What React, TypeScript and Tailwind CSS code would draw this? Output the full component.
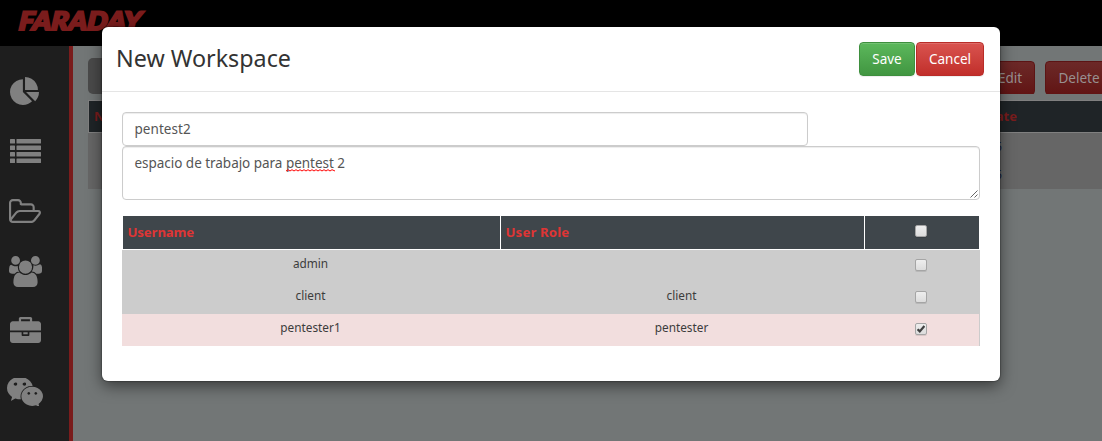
import React from "react";

const icons = {
  pie: "M768 890l546 546q-106 108-247.5 168t-298.5 60q-209 0-385.5-103t-279.5-279.5-103-385.5 103-385.5 279.5-279.5 385.5-103v762zm187 6h773q0 157-60 298.5t-168 247.5zm709-128h-768v-768q209 0 385.5 103t279.5 279.5 103 385.5z",
  folder:
    "M1845 931q0-35-53-35h-1088q-40 0-85.5 21.5t-71.5 52.5l-294 363q-18 24-18 40 0 35 53 35h1088q40 0 86-22t71-53l294-363q18-22 18-39zm-1141-163h768v-160q0-40-28-68t-68-28h-576q-40 0-68-28t-28-68v-64q0-40-28-68t-68-28h-320q-40 0-68 28t-28 68v853l256-315q44-53 116-87.5t140-34.5zm1269 163q0 62-46 120l-295 363q-43 53-116 87.5t-140 34.5h-1088q-92 0-158-66t-66-158v-960q0-92 66-158t158-66h320q92 0 158 66t66 158v32h544q92 0 158 66t66 158v160h192q54 0 99 24.5t67 70.5q15 32 15 68z",
  users:
    "M657 896q-162 5-265 128h-134q-82 0-138-40.5t-56-118.5q0-353 124-353 6 0 43.5 21t97.5 42.5 119 21.5q67 0 133-23-5 37-5 66 0 159 93 293zm1071 637q0 120-73 189.5t-194 69.5h-874q-121 0-194-69.5t-73-189.5q0-53 3.5-103.5t14-109 26.5-108.5 43-97.5 62-81 85.5-53.5 111.5-20q10 0 43 21.5t73 48 107 48 135 21.5 135-21.5 107-48 73-48 43-21.5q61 0 111.5 20t85.5 53.5 62 81 43 97.5 26.5 108.5 14 109 3.5 103.5zm-1024-1277q0 106-75 181t-181 75-181-75-75-181 75-181 181-75 181 75 75 181zm704 384q0 159-112.5 271.5t-271.5 112.5-271.5-112.5-112.5-271.5 112.5-271.5 271.5-112.5 271.5 112.5 112.5 271.5zm576 225q0 78-56 118.5t-138 40.5h-134q-103-123-265-128 93-134 93-293 0-29-5-66 66 23 133 23 59 0 119-21.5t97.5-42.5 43.5-21q124 0 124 353zm-128-609q0 106-75 181t-181 75-181-75-75-181 75-181 181-75 181 75 75 181z",
  briefcase:
    "M640 256h512v-128h-512v128zm1152 640v480q0 66-47 113t-113 47h-1472q-66 0-113-47t-47-113v-480h672v160q0 26 19 45t45 19h320q26 0 45-19t19-45v-160h672zm-768 0v128h-256v-128h256zm768-480v384h-1792v-384q0-66 47-113t113-47h352v-160q0-40 28-68t68-28h576q40 0 68 28t28 68v160h352q66 0 113 47t47 113z",
  chat: "M580 461q0-41-25-66t-66-25q-43 0-76 25.5t-33 65.5q0 39 33 64.5t76 25.5q41 0 66-24.5t25-65.5zm743 507q0-28-25.5-50t-65.5-22q-27 0-49.5 22.5t-22.5 49.5q0 28 22.5 50.5t49.5 22.5q40 0 65.5-22t25.5-51zm-236-507q0-41-24.5-66t-65.5-25q-43 0-76 25.5t-33 65.5q0 39 33 64.5t76 25.5q41 0 65.5-24.5t24.5-65.5zm635 507q0-28-26-50t-65-22q-27 0-49.5 22.5t-22.5 49.5q0 28 22.5 50.5t49.5 22.5q39 0 65-22t26-51zm-266-397q-31-4-70-4-169 0-311 77t-223.5 208.5-81.5 287.5q0 78 23 152-35 3-68 3-26 0-50-1.5t-55-6.5-44.5-7-54.5-10.5-50-10.5l-253 127 72-218q-290-203-290-490 0-169 97.5-311t264-223.5 363.5-81.5q176 0 332.5 66t262 182.5 136.5 260.5zm592 561q0 117-68.5 223.5t-185.5 193.5l55 181-199-109q-150 37-218 37-169 0-311-70.5t-223.5-191.5-81.5-264 81.5-264 223.5-191.5 311-70.5q161 0 303 70.5t227.5 192 85.5 263.5z",
};

function Glyph({ d, box, size }: { d: string; box: string; size: string }) {
  return (
    <svg viewBox={box} className={`block fill-current ${size}`} preserveAspectRatio="none">
      <path d={d} />
    </svg>
  );
}

function Sidebar() {
  return (
    <nav className="flex w-[73px] shrink-0 flex-col border-r-4 border-[#7a1c1c] bg-[#1e1e1e] pt-[15px] text-[#808080]">
      <a className="flex h-[60px] items-center pl-[10px]">
        <Glyph d={icons.pie} box="0 0 1728 1664" size="h-[28px] w-[29px]" />
      </a>
      <a className="flex h-[60px] items-center pl-[10px]">
        <svg viewBox="0 0 31 24" className="block h-6 w-[31px] fill-current">
          {[0, 6.5, 13, 19.5].map((y) => (
            <g key={y}>
              <rect x="0" y={y} width="5" height="4.5" rx="0.5" />
              <rect x="6.5" y={y} width="24.5" height="4.5" rx="0.5" />
            </g>
          ))}
        </svg>
      </a>
      <a className="flex h-[60px] items-center pl-[9px]">
        <Glyph d={icons.folder} box="64 128 1910 1408" size="h-[24px] w-[32px]" />
      </a>
      <a className="flex h-[60px] items-center pl-[9px]">
        <Glyph d={icons.users} box="64 0 1920 1792" size="h-[31px] w-[33px]" />
      </a>
      <a className="flex h-[58px] items-center pl-[10px]">
        <Glyph d={icons.briefcase} box="0 0 1792 1536" size="h-[26px] w-[31px]" />
      </a>
      <a className="flex h-[66px] items-center pl-[7px]">
        <Glyph d={icons.chat} box="0 128 2048 1536" size="h-[28px] w-[36px]" />
      </a>
    </nav>
  );
}

function Backdrop() {
  return (
    <div className="flex h-full flex-col">
      <header className="h-[46px] shrink-0 bg-black pt-[6px] pl-4">
        <svg viewBox="0 0 132 30" className="block h-[30px] w-[132px]">
          <text
            x="2.5"
            y="24"
            textLength="122"
            lengthAdjust="spacingAndGlyphs"
            transform="translate(2.2 0) skewX(-5)"
            className="fill-[#7a1c1c] stroke-[#7a1c1c] font-['Lato'] text-[25.5px] font-black italic"
            strokeWidth="2.2"
          >
            FARADAY
          </text>
        </svg>
      </header>
      <div className="flex min-h-0 grow">
        <Sidebar />
        <main className="flex grow flex-col bg-[#727676] pt-3 pl-[15px] text-[13.5px]">
          <div className="flex h-9 justify-between overflow-hidden">
            <div className="h-9 w-[120px] rounded-[5px] bg-[#4a4a4a]" />
            <div className="flex gap-[10px] text-[#989090]">
              <button className="mt-[3px] h-[34px] w-[60px] rounded border border-[#5c1414] bg-linear-to-b from-[#6c2928] to-[#611414] pl-[10px]">
                Edit
              </button>
              <button className="mt-[3px] -mr-[13px] h-[34px] w-[70px] rounded border border-[#5c1414] bg-linear-to-b from-[#6c2928] to-[#611414] pr-[2px]">
                Delete
              </button>
            </div>
          </div>
          <div className="mt-[6px] flex h-[33px] items-center justify-between border-y border-l border-[#808080] bg-[#1f2427] pr-[85px] pl-[5px] text-[13px] font-bold text-[#7a1c1c]">
            <span>Name</span>
            <span>End Date</span>
          </div>
          <div className="flex h-14 flex-col items-end gap-[10px] bg-[#666] pt-[5px] pr-[100px] text-[11.7px] text-[#15203f]">
            <span>2015</span>
            <span>2015</span>
          </div>
        </main>
      </div>
    </div>
  );
}

function Check({ checked = false }: { checked?: boolean }) {
  return (
    <span className="flex h-3 w-3 items-center justify-center rounded-[2px] border border-[#a5a5a5] bg-linear-to-b from-[#eee] to-[#dcdcdc] shadow-[0_1px_0_rgba(0,0,0,0.1)]">
      {checked && (
        <svg viewBox="0 0 8 8" className="h-2 w-2 fill-none stroke-[#404040]" strokeWidth="2.2">
          <path d="M0.6 4.2L2.8 6.4L7.4 1" />
        </svg>
      )}
    </span>
  );
}

const users = [
  { name: "admin", role: "", checked: false },
  { name: "client", role: "client", checked: false },
  { name: "pentester1", role: "pentester", checked: true },
];

function UserTable() {
  return (
    <div className="mt-4">
      <div className="mx-px grid h-[33px] grid-cols-[377px_363px_114px] gap-px text-[13.2px] font-bold tracking-[-0.12px] text-[#df3535]">
        <div className="flex items-center bg-[#3f464b] pt-px pl-[4.5px]">Username</div>
        <div className="flex items-center bg-[#3f464b] pt-px pl-[4.5px] tracking-[0.15px]">User Role</div>
        <div className="flex items-center justify-center bg-[#3f464b] pr-[2px] pb-[3px]">
          <Check />
        </div>
      </div>
      <div className="mt-px">
        {users.map((u) => (
          <div
            key={u.name}
            className={`grid h-8 grid-cols-[377px_364px_115px] gap-px border-r border-[#ccc] text-center text-[11.8px] leading-[17px] text-[#3c3c3c] ${
              u.checked ? "bg-[#f2dede]" : "bg-[#ccc]"
            }`}
          >
            <span className="pt-[5px]">{u.name}</span>
            <span className="pt-[5px] pr-px">{u.role}</span>
            <span className="flex justify-center pt-[9px] pr-[4px]">
              <Check checked={u.checked} />
            </span>
          </div>
        ))}
      </div>
    </div>
  );
}

function Modal() {
  return (
    <section className="absolute top-[27px] left-[102px] h-[354px] w-[898px] rounded-md bg-white shadow-[0_5px_15px_rgba(0,0,0,0.5),0_0_1px_1px_rgba(0,0,0,0.2)]">
      <div className="flex h-[65px] items-start justify-between border-b border-[#e5e5e5] pr-[15px] pl-[14px] pt-[15px]">
        <h3 className="text-[23.3px] leading-[33px] text-[#333]">New Workspace</h3>
        <div className="mr-px flex gap-px text-[13.5px] text-white">
          <button className="h-[34px] w-14 rounded border border-[#3e8f3e] bg-linear-to-b from-[#5cb85c] to-[#419641] shadow-[inset_0_1px_0_rgba(255,255,255,0.15),0_1px_1px_rgba(0,0,0,0.075)]">
            Save
          </button>
          <button className="h-[34px] w-[68px] rounded border border-[#b92c28] bg-linear-to-b from-[#d9534f] to-[#c12e2a] shadow-[inset_0_1px_0_rgba(255,255,255,0.15),0_1px_1px_rgba(0,0,0,0.075)]">
            Cancel
          </button>
        </div>
      </div>
      <div className="px-5 pt-5 text-[13.5px] text-[#555]">
        <div className="flex h-[34px] w-[686px] items-center rounded border border-[#ccc] px-[11.5px] tracking-[0.05px] shadow-[inset_0_1px_1px_rgba(0,0,0,0.075)]">
          pentest2
        </div>
        <div className="relative h-[54px] rounded border border-[#ccc] px-[11.5px] pt-[6px] leading-5 tracking-[-0.03px] shadow-[inset_0_1px_1px_rgba(0,0,0,0.075)]">
          espacio de trabajo para{" "}
          <span className="relative">
            pentest
            <svg viewBox="0 0 49 3" className="absolute bottom-0 left-0 h-[3px] w-[49px] fill-none stroke-[#f00]">
              <path
                strokeWidth="1"
                d="M0 2L2 .7L4 2L6 .7L8 2L10 .7L12 2L14 .7L16 2L18 .7L20 2L22 .7L24 2L26 .7L28 2L30 .7L32 2L34 .7L36 2L38 .7L40 2L42 .7L44 2L46 .7L49 2"
              />
            </svg>
          </span>{" "}
          2
          <svg viewBox="0 0 8 8" className="absolute right-px bottom-px h-2 w-2 fill-none stroke-[#555]">
            <path d="M0.5 7.5L7.5 0.5M4.5 7.5L7.5 4.5" strokeWidth="0.9" />
          </svg>
        </div>
        <UserTable />
      </div>
    </section>
  );
}

export default function App() {
  return (
    <div className="relative h-[441px] w-[1102px] overflow-hidden font-['Noto_Sans','Open_Sans',sans-serif]">
      <Backdrop />
      <Modal />
    </div>
  );
}
